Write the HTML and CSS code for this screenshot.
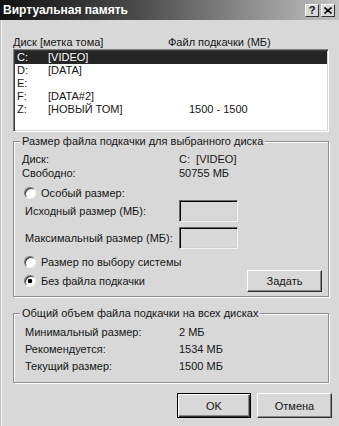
FILE: index.html
```html
<!DOCTYPE html>
<html lang="ru">
  <head>
    <meta charset="UTF-8" />
    <meta name="viewport" content="width=device-width, initial-scale=1.0" />
    <title>Виртуальная память</title>
    <link rel="stylesheet" href="styles.css">
  </head>
  <body>
    <div class="window">
      <div class="titlebar">
        <span class="title">Виртуальная память</span>
        <div class="title-buttons">
          <span class="tbtn">?</span>
          <span class="tbtn">
            <svg width="8" height="7" viewBox="0 0 8 7">
              <path d="M0.5 0.5 L7.5 6.5 M7.5 0.5 L0.5 6.5" stroke="#000" stroke-width="1.6" />
            </svg>
          </span>
        </div>
      </div>

      <div class="content">
        <div class="heads">
          <span class="col-disk">Диск [метка тома]</span>
          <span>Файл подкачки (МБ)</span>
        </div>

        <div class="list">
          <div class="row selected"><span class="drive">C:</span><span class="vol">[VIDEO]</span><span></span></div>
          <div class="row"><span class="drive">D:</span><span class="vol">[DATA]</span><span></span></div>
          <div class="row"><span class="drive">E:</span><span class="vol"></span><span></span></div>
          <div class="row"><span class="drive">F:</span><span class="vol">[DATA#2]</span><span></span></div>
          <div class="row"><span class="drive">Z:</span><span class="vol">[НОВЫЙ ТОМ]</span><span>1500 - 1500</span></div>
        </div>

        <fieldset class="group group-disk">
          <legend>Размер файла подкачки для выбранного диска</legend>
          <div class="info first"><span>Диск:</span><span>C:&nbsp; [VIDEO]</span></div>
          <div class="info"><span>Свободно:</span><span>50755 МБ</span></div>
          <div class="radio-row first"><span class="radio"></span>Особый размер:</div>
          <div class="field"><span>Исходный размер (МБ):</span><span class="input"></span></div>
          <div class="field second"><span>Максимальный размер (МБ):</span><span class="input"></span></div>
          <div class="radio-row"><span class="radio"></span>Размер по выбору системы</div>
          <div class="radio-row last">
            <span class="radio-label"><span class="radio checked"></span>Без файла подкачки</span>
            <button class="btn">Задать</button>
          </div>
        </fieldset>

        <fieldset class="group group-total">
          <legend>Общий объем файла подкачки на всех дисках</legend>
          <div class="total first"><span>Минимальный размер:</span><span>2 МБ</span></div>
          <div class="total"><span>Рекомендуется:</span><span>1534 МБ</span></div>
          <div class="total"><span>Текущий размер:</span><span>1500 МБ</span></div>
        </fieldset>

        <div class="actions">
          <button class="btn default">OK</button>
          <button class="btn">Отмена</button>
        </div>
      </div>
    </div>
  </body>
</html>
```

FILE: styles.css
```css
/* Dialog */
* {
  box-sizing: border-box;
}
body {
  margin: 0;
  background-color: #d8d8d8;
  color: #161616;
  font-family: "Liberation Sans", Arial, sans-serif;
  font-size: 11px;
}
.window {
  width: 339px;
  height: 426px;
  overflow: hidden;
  white-space: nowrap;
  box-shadow: inset 1px 0 0 #c4c4c4, inset 2px 0 0 #f0f0f0;
}

/* Title bar */
.titlebar {
  height: 20px;
  display: flex;
  align-items: center;
  justify-content: space-between;
  padding: 0 4px 0 3px;
  background: linear-gradient(to right, #121212, #4a4a4a 40%, #c2c2c2);
}
.title {
  color: #fff;
  font-weight: bold;
  font-size: 12px;
}
.title-buttons {
  display: flex;
  gap: 2px;
}
.tbtn {
  width: 14px;
  height: 13px;
  display: flex;
  align-items: center;
  justify-content: center;
  background-color: #d8d8d8;
  border: 1px solid;
  border-color: #fff #333 #333 #fff;
  font-weight: bold;
  font-size: 11px;
  line-height: 1;
}

/* Content */
.content {
  padding: 15px 10px 0 13px;
}
.heads {
  display: flex;
  height: 14px;
  line-height: 14px;
}
.col-disk {
  width: 155px;
}
.list {
  height: 83px;
  padding: 1px;
  background-color: #fff;
  border: 1px solid;
  border-color: #808080 #fff #fff #808080;
  box-shadow: inset 1px 1px 0 #3a3a3a, inset -1px -1px 0 #d8d8d8;
}
.row {
  display: flex;
  height: 13px;
  line-height: 13px;
  padding-left: 2px;
}
.row.selected {
  background-color: #262626;
  color: #fff;
}
.drive {
  width: 31px;
}
.vol {
  width: 141px;
}

/* Group boxes */
.group {
  margin: 2px 0 0;
  padding: 0 6px 4px 8px;
  min-width: 0;
  border: 1px solid #8c8c8c;
  box-shadow: 1px 1px 0 #fff, inset 1px 1px 0 #fff;
}
.group legend {
  margin-left: -2px;
  padding: 0 2px;
  line-height: 14px;
  background-color: #d8d8d8;
}
.info {
  display: grid;
  grid-template-columns: 157px auto;
  height: 14px;
  line-height: 14px;
}
.info.first {
  margin-top: 4px;
}
.radio-row {
  display: flex;
  align-items: center;
  gap: 5px;
  height: 14px;
  margin-top: 6px;
  padding-left: 2px;
}
.radio-row.last {
  height: 22px;
  margin-top: 1px;
  justify-content: space-between;
}
.radio-label {
  display: flex;
  align-items: center;
  gap: 5px;
}
.radio {
  width: 12px;
  height: 12px;
  border-radius: 50%;
  background-color: #fff;
  border: 1px solid;
  border-color: #7a7a7a #f4f4f4 #f4f4f4 #7a7a7a;
  box-shadow: inset 1px 1px 0 #333;
}
.radio.checked {
  background: radial-gradient(circle, #000 2px, #fff 2.6px);
}
.field {
  display: grid;
  grid-template-columns: 154px 59px;
  align-items: center;
  height: 22px;
  padding-left: 3px;
}
.field.second {
  margin-top: 5px;
}
.input {
  width: 59px;
  height: 22px;
  border: 1px solid;
  border-color: #6a6a6a #f4f4f4 #f4f4f4 #6a6a6a;
  box-shadow: inset 1px 1px 0 #000, inset -1px -1px 0 #cfcfcf;
}

.group-total {
  margin-top: 9px;
  padding-bottom: 7px;
}
.total {
  display: grid;
  grid-template-columns: 154px auto;
  height: 17px;
  line-height: 17px;
  padding-left: 3px;
}
.total.first {
  margin-top: 4px;
}

/* Buttons */
.btn {
  width: 75px;
  height: 22px;
  padding: 0;
  font: inherit;
  color: inherit;
  background-color: #d8d8d8;
  border: 1px solid;
  border-color: #fff #303030 #303030 #fff;
  box-shadow: inset -1px -1px 0 #888;
}
.actions {
  display: flex;
  justify-content: flex-end;
  gap: 6px;
  margin: 10px -3px 0 0;
}
.actions .btn {
  height: 25px;
}
.btn.default {
  width: 74px;
  border-color: #000;
  box-shadow: inset 1px 1px 0 #fff, inset -1px -1px 0 #303030, inset -2px -2px 0 #888;
}
```
